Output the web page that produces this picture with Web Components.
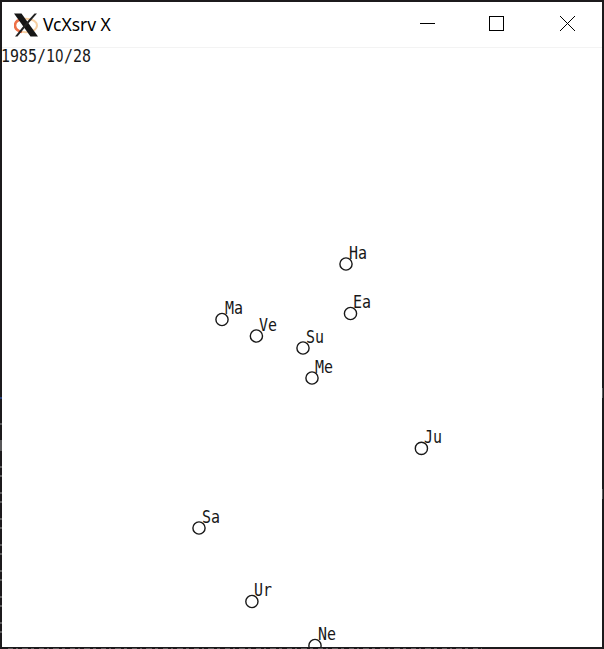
<!DOCTYPE html>
<html lang="en"><head><meta charset="utf-8"><title>VcXsrv X</title>
<style>html,body{margin:0;height:100%;overflow:hidden;background:#1c1c1e}</style></head><body>
<x-window><title-bar slot="bar">VcXsrv X</title-bar><orrery-canvas date="1985/10/28"></orrery-canvas></x-window>
<script>
const define=(name,html,init)=>customElements.define(name,class extends HTMLElement{
 constructor(){super();this.attachShadow({mode:'open'}).innerHTML=html}
 connectedCallback(){if(init)init(this,this.shadowRoot)}
});
define('x-window',`<style>
:host{display:grid;grid-template-rows:46px 1fr;box-sizing:border-box;width:604px;height:649px;padding:2px;background:#1c1a1c;position:relative;overflow:hidden}
.edge{position:absolute;left:0;top:0;pointer-events:none}
</style><slot name="bar"></slot><slot></slot>
<svg class="edge" width="604" height="649" shape-rendering="crispEdges">
<path d="M0 397h2v2H0z" fill="#263f7c"/>
<path d="M0 423h2v2H0zM0 440h2v11H0z M602 388h1v10h-1zM602 489h1v10h-1z" fill="#58585a"/>
<path d="M1 466v182" stroke="#5c5c5c" stroke-width="2" stroke-dasharray="2 7 2 15"/>
<path d="M8 648.5h474" stroke="#5a5a5a" stroke-dasharray="5 3 2 4 6 3 3 5"/>
</svg>`);
define('title-bar',`<style>
:host{display:flex;align-items:center;height:46px;box-sizing:border-box;background:#fff;border-bottom:1px solid #f3f3f3;color:#000;font:17.5px/1 "Noto Sans","Open Sans",sans-serif}
.logo{margin-left:12px;width:24px;height:24px}
.name{margin-left:5px;flex:1;letter-spacing:-.05px;white-space:nowrap}
.controls{display:grid;grid-template-columns:69px 71px 70px;height:45px}
.controls svg{width:100%;height:44px}
</style>
<svg class="logo" viewBox="0 0 24 24"><ellipse cx="12" cy="12.5" rx="11" ry="6.8" fill="none" stroke="#f7cfa2" stroke-width="2"/><path d="M8 6.3C3 7 1 9.5 1 12.5S3 18 8 19" fill="none" stroke="#ee7048" stroke-width="2.5"/><path d="M0 .5h7.5l16.5 23h-7.5z" fill="#161616"/><path d="M20.5.5H23L13 12 3.5 23.5H1L11 11z" fill="#222"/></svg>
<span class="name"><slot></slot></span>
<div class="controls">
<svg viewBox="0 0 69 44" shape-rendering="crispEdges"><path d="M28 21.5h15" stroke="#000"/></svg>
<svg viewBox="0 0 71 44" shape-rendering="crispEdges"><path d="M28.5 14.5h14v14h-14z" fill="none" stroke="#000"/></svg>
<svg viewBox="0 0 70 44"><path d="M28 14l15 15M43 14L28 29" stroke="#000" stroke-width="1"/></svg>
</div>`);
define('planet-mark',`<style>
:host{position:absolute;width:0;height:0}
svg{position:absolute;left:-8px;top:-8px;width:16px;height:16px}
span{position:absolute;left:3px;top:-19px;font:14.95px/18px "DejaVu Sans Mono",monospace;transform:scaleY(1.16);transform-origin:0 14px;white-space:pre}
</style><svg viewBox="0 0 16 16"><circle cx="8" cy="8" r="6.1" fill="none" stroke="#181818" stroke-width="1.4"/></svg><span><slot></slot></span>`);
define('orrery-canvas',`<style>
:host{display:block;position:relative;background:#fff;color:#181818}
.sky{position:absolute;inset:0;overflow:hidden}
.date{width:max-content;margin-left:-1px;font:14.95px/15px "DejaVu Sans Mono",monospace;transform:scaleY(1.14);transform-origin:0 0;white-space:pre}
.zero{font-family:"DejaVu Sans",sans-serif;display:inline-block;width:9px;transform:scaleX(.9);transform-origin:0 0}
</style><div class="date"></div><div class="sky"></div>`,(host,root)=>{
 root.querySelector('.date').innerHTML=host.getAttribute('date').replace(/0/g,'<span class="zero">0</span>');
 const bodies=[['Ha',346,264],['Ea',350.5,313.5],['Ma',222,319.5],['Ve',256.4,336],['Su',303,348],['Me',312,378],['Ju',421.4,448.4],['Sa',199,528],['Ur',251.9,601.5],['Ne',315,645.5]];
 for(const [name,x,y] of bodies){const m=document.createElement('planet-mark');m.textContent=name;m.style.left=Math.floor(x)-2+'px';m.style.top=Math.floor(y)-48+'px';const c=m.shadowRoot.querySelector('circle');c.setAttribute('cx',8+x%1);c.setAttribute('cy',8+y%1);root.querySelector('.sky').append(m)}
});
</script></body></html>
